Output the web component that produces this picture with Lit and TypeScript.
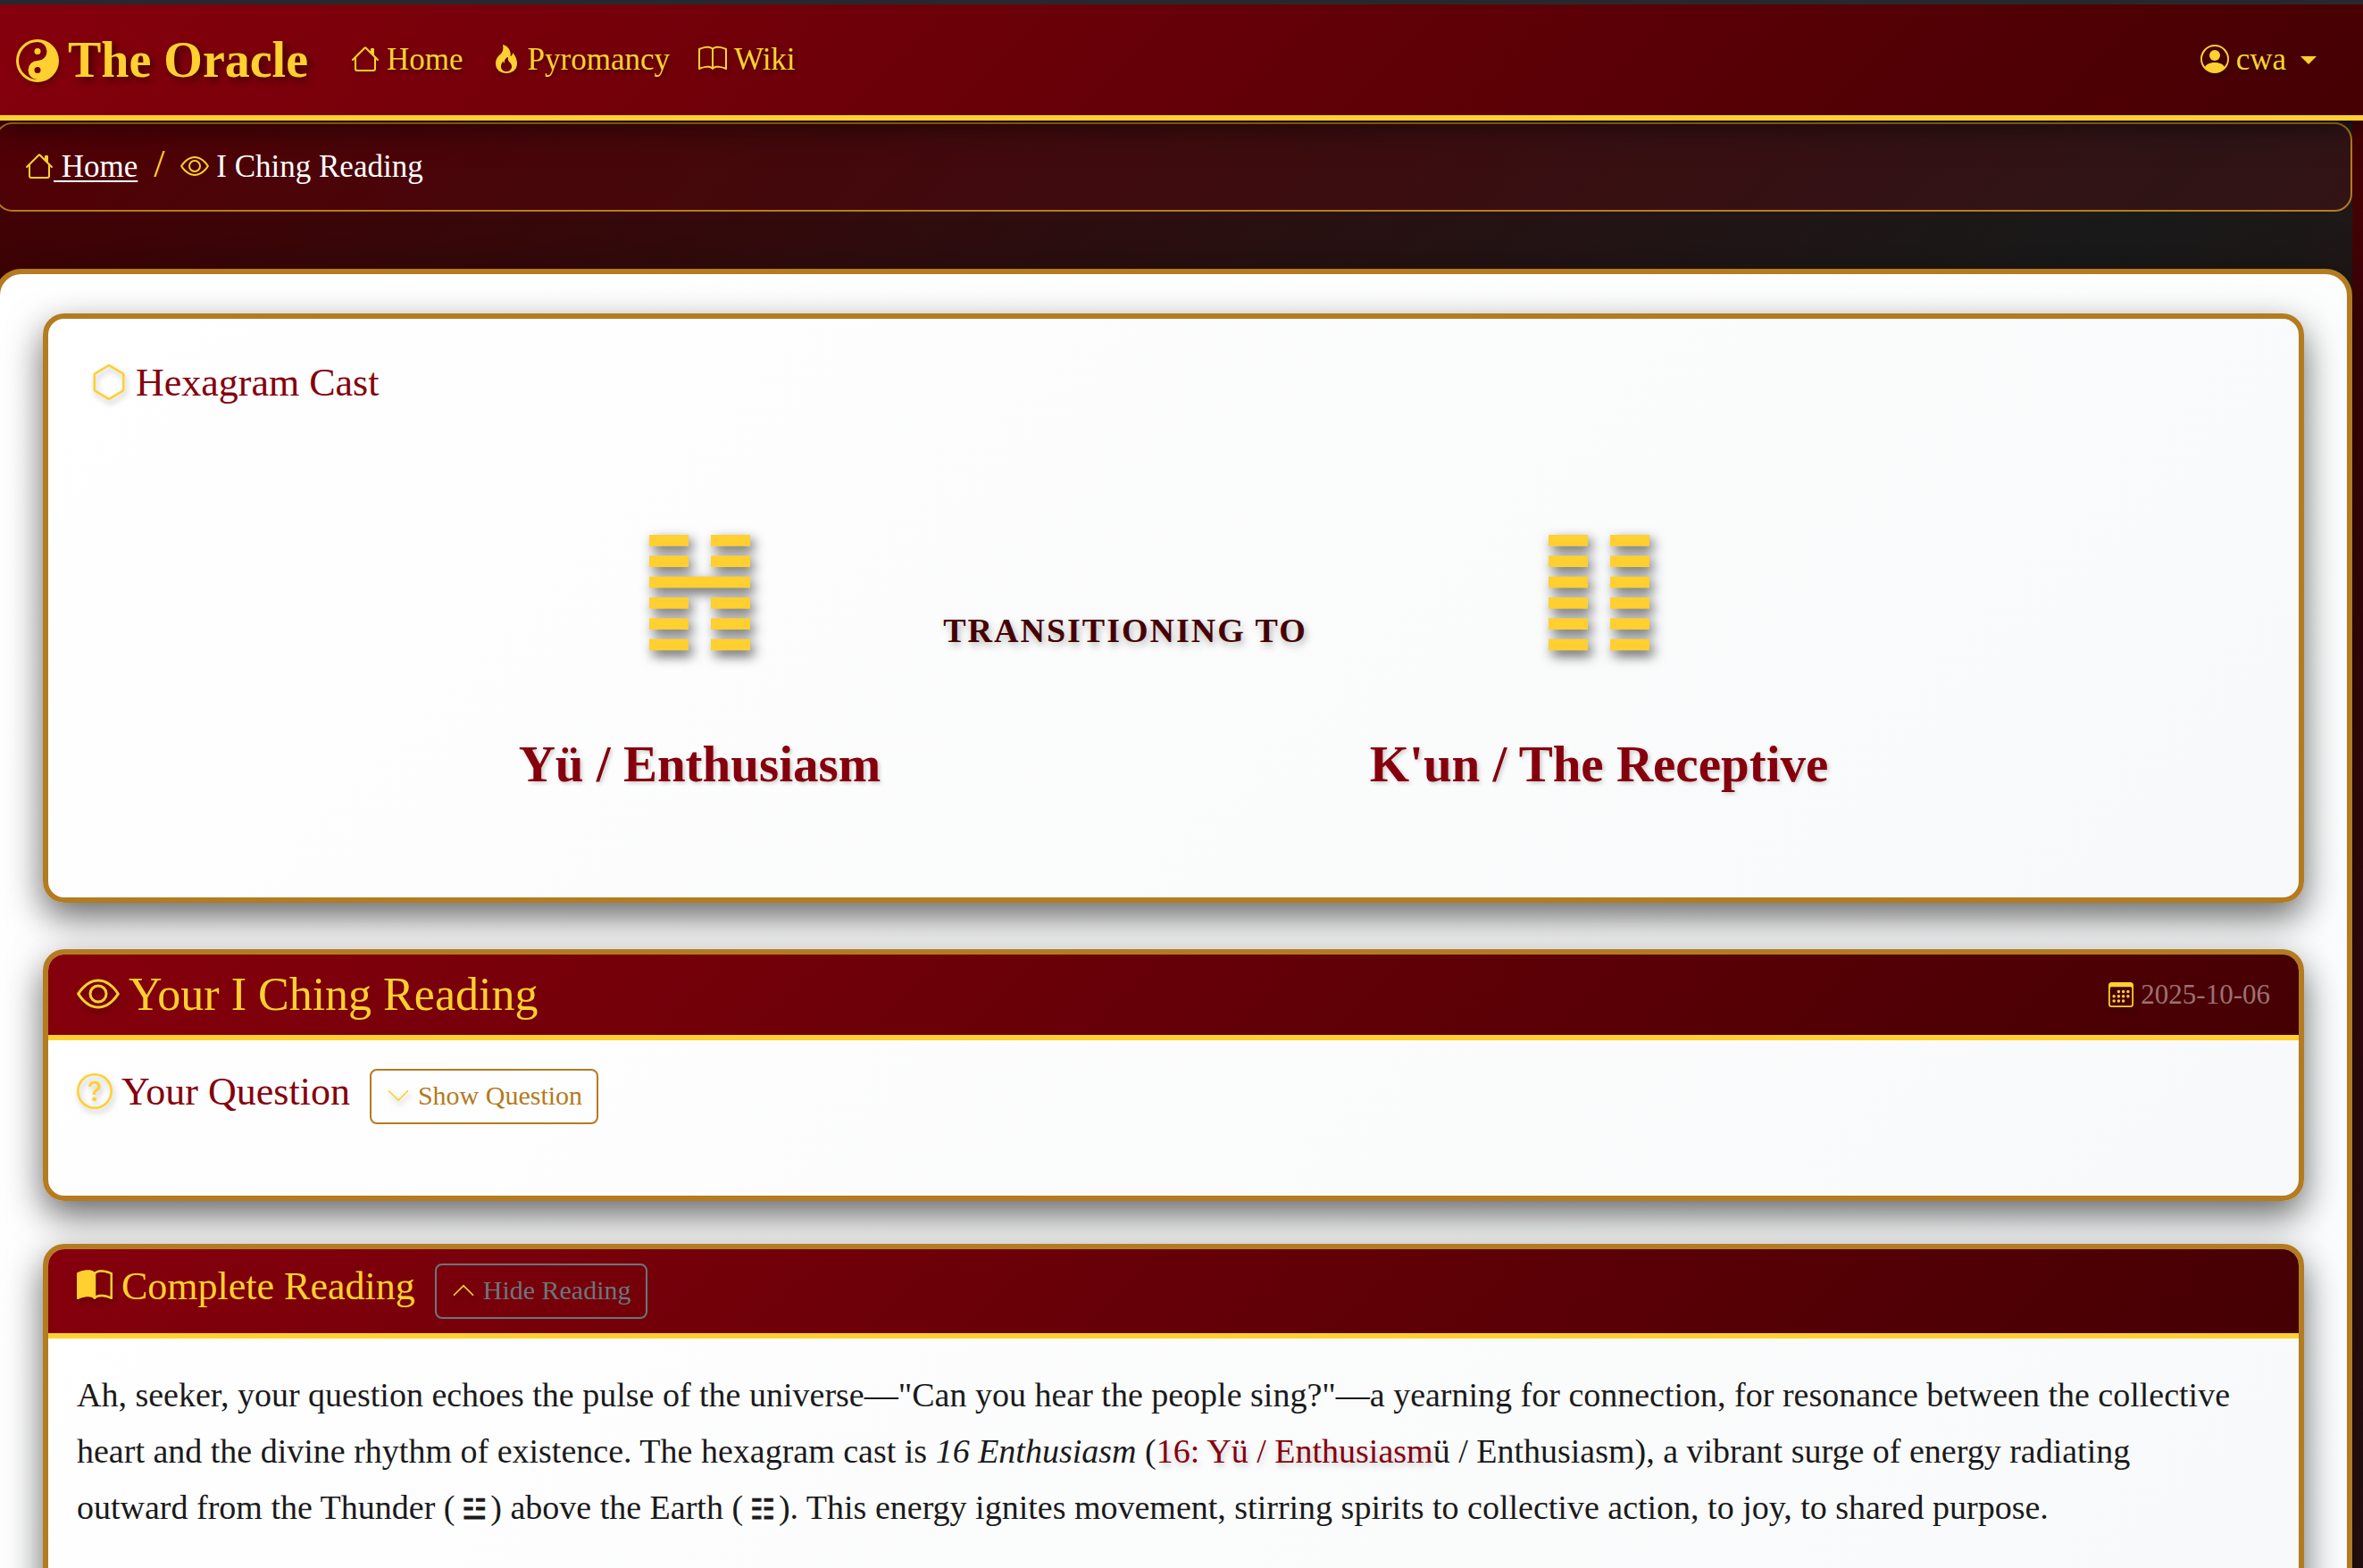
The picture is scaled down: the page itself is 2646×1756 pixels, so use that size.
import { LitElement, html, css, svg } from "lit";
import { customElement, property, state } from "lit/decorators.js";

const BOOK_OUTLINE =
  "M8 1.783C7.015.936 5.587.81 4.287.94c-1.514.153-3.042.672-3.994 1.105A.5.5 0 0 0 0 2.5v11a.5.5 0 0 0 .707.455c.882-.4 2.303-.881 3.68-1.02 1.409-.142 2.59.087 3.223.877a.5.5 0 0 0 .78 0c.633-.79 1.814-1.019 3.222-.877 1.378.139 2.8.62 3.681 1.02A.5.5 0 0 0 16 13.5v-11a.5.5 0 0 0-.293-.455c-.952-.433-2.48-.952-3.994-1.105C10.413.809 8.985.936 8 1.783";

const ICONS: Record<string, string[]> = {
  yinYang: [
    "M9.167 4.5a1.167 1.167 0 1 1-2.334 0 1.167 1.167 0 0 1 2.334 0",
    "M8 0a8 8 0 1 0 0 16A8 8 0 0 0 8 0M1 8a7 7 0 0 1 7-7 3.5 3.5 0 1 1 0 7 3.5 3.5 0 1 0 0 7 7 7 0 0 1-7-7m7 4.667a1.167 1.167 0 1 1 0-2.334 1.167 1.167 0 0 1 0 2.334",
  ],
  house: [
    "M8.707 1.5a1 1 0 0 0-1.414 0L.646 8.146a.5.5 0 0 0 .708.708L2 8.207V13.5A1.5 1.5 0 0 0 3.5 15h9a1.5 1.5 0 0 0 1.5-1.5V8.207l.646.647a.5.5 0 0 0 .708-.708L13 5.793V2.5a.5.5 0 0 0-.5-.5h-1a.5.5 0 0 0-.5.5v1.293zM13 7.207V13.5a.5.5 0 0 1-.5.5h-9a.5.5 0 0 1-.5-.5V7.207l5-5z",
  ],
  fire: [
    "M8 16c3.314 0 6-2 6-5.5 0-1.5-.5-4-2.5-6 .25 1.5-1.25 2-1.25 2C11 4 9 .5 6 0c.357 2 .5 4-2 6-1.25 1-2 2.729-2 4.5C2 14 4.686 16 8 16m0-1c-1.657 0-3-1-3-2.75 0-.75.25-2 1.25-3C6.125 10 7 10.5 7 10.5c-.375-1.25.5-3.25 2-3.5-.179 1-.25 2 1 3 .625.5 1 1.364 1 2.25C11 14 9.657 15 8 15",
  ],
  book: [
    "M1 2.828c.885-.37 2.154-.769 3.388-.893 1.33-.134 2.458.063 3.112.752v9.746c-.935-.53-2.12-.603-3.213-.493-1.18.12-2.37.461-3.287.811zm7.5-.141c.654-.689 1.782-.886 3.112-.752 1.234.124 2.503.523 3.388.893v9.923c-.918-.35-2.107-.692-3.287-.81-1.094-.111-2.278-.039-3.213.492z" +
      BOOK_OUTLINE,
  ],
  bookHalf: [
    "M8.5 2.687c.654-.689 1.782-.886 3.112-.752 1.234.124 2.503.523 3.388.893v9.923c-.918-.35-2.107-.692-3.287-.81-1.094-.111-2.278-.039-3.213.492z" +
      BOOK_OUTLINE,
  ],
  person: [
    "M11 6a3 3 0 1 1-6 0 3 3 0 0 1 6 0",
    "M0 8a8 8 0 1 1 16 0A8 8 0 0 1 0 8m8-7a7 7 0 0 0-5.468 11.37C3.242 11.226 4.805 10 8 10s4.757 1.225 5.468 2.37A7 7 0 0 0 8 1",
  ],
  eye: [
    "M16 8s-3-5.5-8-5.5S0 8 0 8s3 5.5 8 5.5S16 8 16 8M1.173 8a13 13 0 0 1 1.66-2.043C4.12 4.668 5.88 3.5 8 3.5s3.879 1.168 5.168 2.457A13 13 0 0 1 14.828 8q-.086.13-.195.288c-.335.48-.83 1.12-1.465 1.755C11.879 11.332 10.119 12.5 8 12.5s-3.879-1.168-5.168-2.457A13 13 0 0 1 1.172 8z",
    "M8 5.5a2.5 2.5 0 1 0 0 5 2.5 2.5 0 0 0 0-5M4.5 8a3.5 3.5 0 1 1 7 0 3.5 3.5 0 0 1-7 0",
  ],
  hexagon: [
    "M14 4.577v6.846L8 15l-6-3.577V4.577L8 1zM8.5.134a1 1 0 0 0-1 0l-6 3.577a1 1 0 0 0-.5.866v6.846a1 1 0 0 0 .5.866l6 3.577a1 1 0 0 0 1 0l6-3.577a1 1 0 0 0 .5-.866V4.577a1 1 0 0 0-.5-.866z",
  ],
  question: [
    "M8 15A7 7 0 1 1 8 1a7 7 0 0 1 0 14m0 1A8 8 0 1 0 8 0a8 8 0 0 0 0 16",
    "M5.255 5.786a.237.237 0 0 0 .241.247h.825c.138 0 .248-.113.266-.25.09-.656.54-1.134 1.342-1.134.686 0 1.314.343 1.314 1.168 0 .635-.374.927-.965 1.371-.673.489-1.206 1.06-1.168 1.987l.003.217a.25.25 0 0 0 .25.246h.811a.25.25 0 0 0 .25-.25v-.105c0-.718.273-.927 1.01-1.486.609-.463 1.244-.977 1.244-2.056 0-1.511-1.276-2.241-2.673-2.241-1.267 0-2.655.59-2.75 2.286m1.557 5.763c0 .533.425.927 1.01.927.609 0 1.028-.394 1.028-.927 0-.552-.42-.94-1.029-.94-.584 0-1.009.388-1.009.94",
  ],
  chevronDown: [
    "M1.646 4.646a.5.5 0 0 1 .708 0L8 10.293l5.646-5.647a.5.5 0 0 1 .708.708l-6 6a.5.5 0 0 1-.708 0l-6-6a.5.5 0 0 1 0-.708",
  ],
  chevronUp: [
    "M7.646 4.646a.5.5 0 0 1 .708 0l6 6a.5.5 0 0 1-.708.708L8 5.707l-5.646 5.647a.5.5 0 0 1-.708-.708z",
  ],
  calendar: [
    "M14 0H2a2 2 0 0 0-2 2v12a2 2 0 0 0 2 2h12a2 2 0 0 0 2-2V2a2 2 0 0 0-2-2M1 3.857C1 3.384 1.448 3 2 3h12c.552 0 1 .384 1 .857v10.286c0 .473-.448.857-1 .857H2c-.552 0-1-.384-1-.857z",
    "M6.5 7a1 1 0 1 0 0-2 1 1 0 0 0 0 2m3 0a1 1 0 1 0 0-2 1 1 0 0 0 0 2m3 0a1 1 0 1 0 0-2 1 1 0 0 0 0 2m-9 3a1 1 0 1 0 0-2 1 1 0 0 0 0 2m3 0a1 1 0 1 0 0-2 1 1 0 0 0 0 2m3 0a1 1 0 1 0 0-2 1 1 0 0 0 0 2m3 0a1 1 0 1 0 0-2 1 1 0 0 0 0 2m-9 3a1 1 0 1 0 0-2 1 1 0 0 0 0 2m3 0a1 1 0 1 0 0-2 1 1 0 0 0 0 2m3 0a1 1 0 1 0 0-2 1 1 0 0 0 0 2",
  ],
};

const icon = (name: string, size: "sm" | "md" | "lg" | "xl") => html`<svg
  class="icon ${size}"
  viewBox="0 0 16 16"
  aria-hidden="true"
>${ICONS[name].map((d) => svg`<path fill-rule="evenodd" d=${d}></path>`)}</svg>`;

/** Six stacked lines, top to bottom: true is a solid line, false a broken one. */
@customElement("hexagram-figure")
export class HexagramFigure extends LitElement {
  @property({ attribute: false }) lines: boolean[] = [];
  @property() name = "";

  static styles = css`
    :host {
      display: block;
    }
    .figure {
      display: block;
      width: 113px;
      height: 130px;
      fill: #ffd02f;
      overflow: visible;
      filter: drop-shadow(4px 6px 7px rgba(0, 0, 0, 0.65));
    }
  `;

  render() {
    return html`<svg class="figure" viewBox="0 0 339 390" role="img" aria-label=${this.name}>
      ${this.lines.map((solid, i) =>
        solid
          ? svg`<rect x="0" y=${i * 70} width="339" height="38"></rect>`
          : svg`<rect x="0" y=${i * 70} width="132" height="38"></rect><rect x="207" y=${i * 70} width="132" height="38"></rect>`
      )}
    </svg>`;
  }
}

@customElement("app-root")
export class AppRoot extends LitElement {
  @state() private questionOpen = false;
  @state() private readingOpen = true;

  static styles = css`
    :host {
      --gold: #ffd02f;
      --bronze: #b47b20;
      --crimson: #85000c;
      --maroon: #450003;
      --banner: linear-gradient(135deg, var(--crimson), var(--maroon));
      display: block;
      box-sizing: border-box;
      height: 100vh;
      overflow: hidden auto;
      scrollbar-width: none;
      background: linear-gradient(135deg, #450003, #1a1a1a 50%, #450003);
      background-size: calc(100% - 12px) 150vh;
      font-family: "Liberation Serif", serif;
      font-size: 35px;
      line-height: 48px;
      color: #1a1a1a;
    }
    * {
      box-sizing: border-box;
    }
    h1,
    h2,
    p,
    ol {
      margin: 0;
      padding: 0;
      font-weight: 400;
    }
    a {
      color: inherit;
      text-decoration: none;
    }
    .icon {
      fill: var(--gold);
      filter: drop-shadow(2px 4px 3px rgba(0, 0, 0, 0.25));
    }
    .sm {
      width: 28px;
      height: 28px;
      margin-right: 8px;
      vertical-align: -4px;
    }
    .md {
      width: 32px;
      height: 32px;
      margin-right: 8px;
      vertical-align: -4px;
    }
    .lg {
      width: 40px;
      height: 40px;
      margin-right: 10px;
      vertical-align: -5px;
    }
    .xl {
      width: 48px;
      height: 48px;
      margin-right: 10px;
      vertical-align: -6px;
    }

    .topbar {
      position: relative;
      z-index: 1;
      display: flex;
      align-items: center;
      height: 135px;
      padding: 0 52px 0 18px;
      border-top: 5px solid #27282d;
      border-bottom: 6px solid var(--gold);
      background: var(--banner);
      box-shadow: 0 8px 30px rgba(0, 0, 0, 0.5);
      color: var(--gold);
      text-shadow: 2px 2px 4px rgba(0, 0, 0, 0.5);
    }
    .brand {
      margin-right: 32px;
      font-size: 56px;
      font-weight: 700;
      line-height: 68px;
      text-shadow: 4px 4px 8px rgba(0, 0, 0, 0.5);
    }
    .links {
      display: flex;
      flex: 1;
    }
    .links a {
      padding: 0 16px;
    }
    .account {
      display: flex;
      align-items: center;
      gap: 16px;
      padding: 0;
      border: 0;
      background: none;
      color: inherit;
      font: inherit;
      text-shadow: inherit;
    }
    .caret {
      border: 9px solid transparent;
      border-top-color: var(--gold);
      border-bottom: 0;
    }

    .page {
      margin: 2px 12px 0 -6px;
    }
    .crumbs {
      height: 100px;
      margin-bottom: 64px;
      padding: 24px 32px;
      border: 2px solid var(--bronze);
      border-radius: 20px;
      background: rgba(133, 0, 12, 0.2);
      color: #fff;
    }
    .crumbs ol {
      display: flex;
      list-style: none;
    }
    .crumbs .icon {
      filter: none;
    }
    .crumbs a .icon {
      margin-right: 0;
    }
    .crumbs a span {
      white-space: pre;
      text-decoration: underline 2px;
      text-underline-offset: 4px;
    }
    .crumbs li + li::before {
      content: "/";
      display: inline-block;
      width: 48px;
      color: var(--gold);
      font-size: 44px;
      line-height: 40px;
      text-align: center;
    }

    .panel {
      padding: 44px 48px;
      border: 6px solid var(--bronze);
      border-radius: 30px;
      background: linear-gradient(135deg, #ffffff, #fbfcfd);
      box-shadow: 0 16px 60px rgba(0, 0, 0, 0.5);
    }
    .card {
      margin-bottom: 48px;
      border: 6px solid var(--bronze);
      border-radius: 24px;
      background: linear-gradient(135deg, #ffffff, #f8f9fa);
      box-shadow: 0 16px 40px rgba(0, 0, 0, 0.6);
    }
    .cast {
      margin-bottom: 52px;
      padding: 48px 48px 115px;
    }
    .title {
      color: var(--crimson);
      font-size: 44px;
      line-height: 48px;
    }
    .shift {
      display: flex;
      align-items: center;
      justify-content: center;
      gap: 70px;
      padding-top: 68px;
    }
    .sign {
      display: flex;
      flex-direction: column;
      align-items: center;
      gap: 93px;
      padding-top: 78px;
    }
    .sign-name {
      color: var(--crimson);
      font-size: 57px;
      font-weight: 700;
      line-height: 68px;
      text-shadow: 2px 2px 4px rgba(0, 0, 0, 0.2);
    }
    .becoming {
      color: var(--maroon);
      font-size: 38px;
      font-weight: 700;
      letter-spacing: 2px;
      text-transform: uppercase;
      text-shadow: 2px 4px 8px rgba(0, 0, 0, 0.3);
    }

    .head {
      display: flex;
      align-items: center;
      justify-content: space-between;
      padding: 16px 32px;
      border-bottom: 6px solid var(--gold);
      border-radius: 18px 18px 0 0;
      background: var(--banner);
      color: var(--gold);
    }
    .head .title {
      color: inherit;
    }
    .headline {
      font-size: 52px;
      line-height: 58px;
    }
    .date {
      color: #9e7073;
      font-size: 31px;
      line-height: 40px;
    }
    .row {
      display: flex;
      align-items: baseline;
      gap: 22px;
    }
    .question {
      padding: 32px 32px 80px;
    }
    .toggle {
      padding: 8px 16px 10px;
      border: 2px solid var(--bronze);
      border-radius: 8px;
      background: none;
      color: var(--bronze);
      font: inherit;
      font-size: 30px;
      line-height: 40px;
    }
    .muted {
      border-color: #6c757d;
      color: #6c757d;
    }
    .reading {
      padding: 32px 64px 80px 32px;
      font-size: 38px;
      line-height: 63px;
    }
    .reading a {
      color: var(--crimson);
      text-shadow: 2px 4px 6px rgba(0, 0, 0, 0.2);
    }
    .trigram {
      display: inline-block;
      margin: 0 4px 0 8px;
      font-family: "DejaVu Sans", sans-serif;
      font-size: 31px;
      font-style: italic;
      font-weight: 700;
      line-height: 32px;
      -webkit-text-stroke: 1px currentColor;
    }
  `;

  render() {
    return html`
      <header class="topbar">
        <a class="brand" href="#">${icon("yinYang", "xl")}The Oracle</a>
        <nav class="links" aria-label="Main">
          <a href="#home">${icon("house", "md")}Home</a>
          <a href="#pyromancy">${icon("fire", "md")}Pyromancy</a>
          <a href="#wiki">${icon("book", "md")}Wiki</a>
        </nav>
        <button class="account" type="button" aria-haspopup="menu">
          <span>${icon("person", "md")}cwa</span><span class="caret"></span>
        </button>
      </header>

      <div class="page">
        <nav class="crumbs" aria-label="Breadcrumb">
          <ol>
            <li><a href="#home">${icon("house", "md")}<span> Home</span></a></li>
            <li aria-current="page">${icon("eye", "md")}I Ching Reading</li>
          </ol>
        </nav>

        <main class="panel">
          <section class="card cast">
            <h2 class="title">${icon("hexagon", "lg")}Hexagram Cast</h2>
            <div class="shift">
              <div class="sign">
                <hexagram-figure
                  name="Hexagram 16"
                  .lines=${[false, false, true, false, false, false]}
                ></hexagram-figure>
                <div class="sign-name">Yü / Enthusiasm</div>
              </div>
              <div class="becoming">Transitioning to</div>
              <div class="sign">
                <hexagram-figure
                  name="Hexagram 2"
                  .lines=${[false, false, false, false, false, false]}
                ></hexagram-figure>
                <div class="sign-name">K'un / The Receptive</div>
              </div>
            </div>
          </section>

          <section class="card">
            <div class="head">
              <h1 class="headline">${icon("eye", "xl")}Your I Ching Reading</h1>
              <time class="date" datetime="2025-10-06">${icon("calendar", "sm")}2025-10-06</time>
            </div>
            <div class="question">
              <div class="row">
                <h2 class="title">${icon("question", "lg")}Your Question</h2>
                <button
                  class="toggle"
                  type="button"
                  aria-expanded=${this.questionOpen}
                  @click=${() => (this.questionOpen = !this.questionOpen)}
                >${this.questionOpen
                  ? html`${icon("chevronUp", "sm")}Hide Question`
                  : html`${icon("chevronDown", "sm")}Show Question`}</button>
              </div>
              ${this.questionOpen ? html`<p>Can you hear the people sing?</p>` : null}
            </div>
          </section>

          <section class="card">
            <div class="head">
              <div class="row">
                <h2 class="title">${icon("bookHalf", "lg")}Complete Reading</h2>
                <button
                  class="toggle muted"
                  type="button"
                  aria-expanded=${this.readingOpen}
                  @click=${() => (this.readingOpen = !this.readingOpen)}
                >${this.readingOpen
                  ? html`${icon("chevronUp", "sm")}Hide Reading`
                  : html`${icon("chevronDown", "sm")}Show Reading`}</button>
              </div>
            </div>
            ${this.readingOpen
              ? html`<p class="reading">
                  Ah, seeker, your question echoes the pulse of the universe—"Can you hear the
                  people sing?"—a yearning for connection, for resonance between the collective
                  heart and the divine rhythm of existence. The hexagram cast is
                  <em>16 Enthusiasm</em> (<a href="#hexagram-16">16: Yü / Enthusiasm</a>ü /
                  Enthusiasm), a vibrant surge of energy radiating outward from the Thunder
                  (<span class="trigram">☳</span>) above the Earth
                  (<span class="trigram">☷</span>). This energy ignites movement, stirring spirits
                  to collective action, to joy, to shared purpose.
                </p>`
              : null}
          </section>
        </main>
      </div>
    `;
  }
}
